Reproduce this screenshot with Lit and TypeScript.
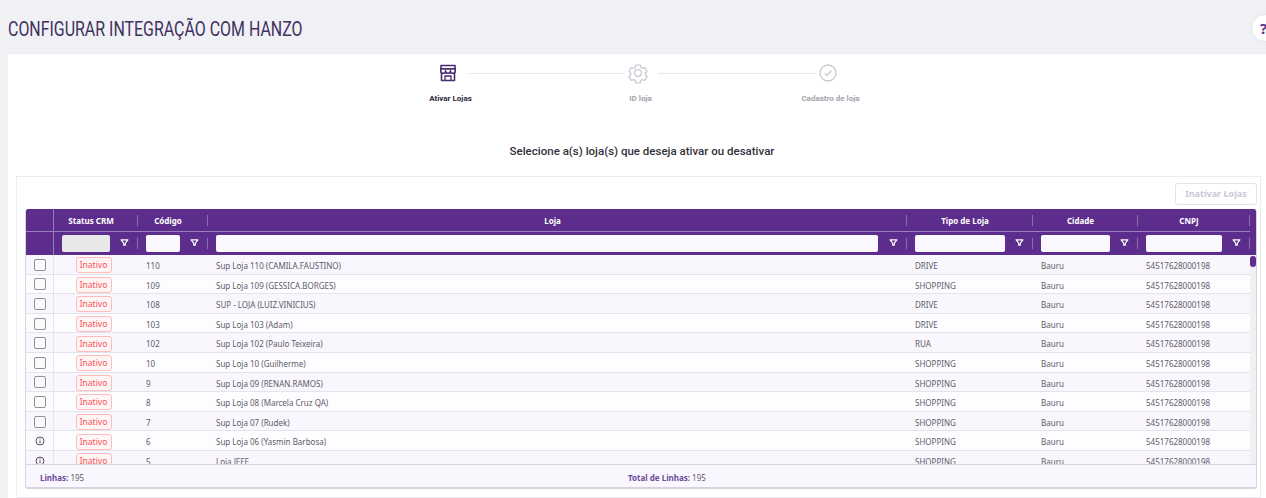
import { LitElement, html, css, svg } from "lit";
import { customElement } from "lit/decorators.js";

const rows: [string, string, string, string][] = [
  ["110", "Sup Loja 110 (CAMILA.FAUSTINO)", "DRIVE", "c"],
  ["109", "Sup Loja 109 (GESSICA.BORGES)", "SHOPPING", "c"],
  ["108", "SUP - LOJA (LUIZ.VINICIUS)", "DRIVE", "c"],
  ["103", "Sup Loja 103 (Adam)", "DRIVE", "c"],
  ["102", "Sup Loja 102 (Paulo Teixeira)", "RUA", "c"],
  ["10", "Sup Loja 10 (Guilherme)", "SHOPPING", "c"],
  ["9", "Sup Loja 09 (RENAN.RAMOS)", "SHOPPING", "c"],
  ["8", "Sup Loja 08 (Marcela Cruz QA)", "SHOPPING", "c"],
  ["7", "Sup Loja 07 (Rudek)", "SHOPPING", "c"],
  ["6", "Sup Loja 06 (Yasmin Barbosa)", "SHOPPING", "i"],
  ["5", "Loja JEFF", "SHOPPING", "i"],
];

const funnel = svg`<svg class="funnel" viewBox="0 0 10 10" width="9" height="9"><path d="M1.2 2h7.6L5.9 5.6V8H4.1V5.6z" fill="none" stroke="#fff" stroke-width="1.3" stroke-linejoin="round"/></svg>`;

const cols = [
  { t: "Status CRM", w: 48, dis: true },
  { t: "Código", w: 34 },
  { t: "Loja", w: 662 },
  { t: "Tipo de Loja", w: 90 },
  { t: "Cidade", w: 69 },
  { t: "CNPJ", w: 76 },
];

@customElement("app-root")
export class AppRoot extends LitElement {
  static styles = css`
    :host {
      display: block;
      position: relative;
      width: 1266px;
      height: 498px;
      overflow: hidden;
      background: #f0f1f5;
      font-family: "Noto Sans", sans-serif;
    }
    .help {
      position: absolute;
      left: 1251px;
      top: 14px;
      width: 28px;
      height: 28px;
      border-radius: 50%;
      background: #fff;
      border: 1px solid #e2e2e8;
      box-sizing: border-box;
      color: #5b2d8c;
      font: 700 15px/26px "Noto Sans", sans-serif;
      padding-left: 8px;
    }
    h1 {
      margin: 0;
      height: 53px;
      box-sizing: border-box;
      padding: 17px 0 0 8px;
      font: 400 20px/25px "Roboto", sans-serif;
      color: #41305f;
      white-space: nowrap;
      transform: scaleX(0.797);
      transform-origin: 8px 0;
    }
    .card {
      margin-left: 8px;
      width: 1262px;
      height: 445px;
      background: #fff;
      box-sizing: border-box;
      border-top: 1px solid #e9e9ee;
      padding-top: 7px;
    }
    .steps {
      display: flex;
      margin-left: 345px;
      width: 570px;
    }
    .step {
      width: 190px;
      display: flex;
      flex-direction: column;
      align-items: center;
      position: relative;
      font: 700 8px/12px "Roboto", sans-serif;
      color: #a3a3ad;
      gap: 8px;
    }
    .step span {
      padding-left: 5px;
    }
    .step.on {
      color: #2d2a3a;
    }
    .step .ic {
      width: 24px;
      height: 24px;
      display: block;
    }
    .line {
      position: absolute;
      top: 12px;
      left: 115px;
      width: 157px;
      height: 1px;
      background: #e7e7ec;
    }
    h2 {
      margin: 38px 0 0 0;
      padding-left: 6px;
      text-align: center;
      font: 500 11.5px/16px "Roboto", sans-serif;
      color: #33313b;
      height: 24px;
    }
    .inner {
      margin: 9px 0 0 8px;
      width: 1245px;
      height: 322px;
      box-sizing: border-box;
      border: 1px solid #ececf0;
      padding: 6px 3px 0 8px;
      display: flex;
      flex-direction: column;
      align-items: flex-end;
    }
    .btn {
      width: 82px;
      height: 22px;
      box-sizing: border-box;
      border: 1px solid #e2e2e8;
      border-radius: 3px;
      background: #fff;
      color: #c9c9d6;
      font: 700 9px/20px "Noto Sans", sans-serif;
      text-align: center;
      flex: none;
    }
    .table {
      margin-top: 4px;
      width: 1232px;
      height: 280px;
      box-sizing: border-box;
      flex: none;
      border: 1px solid #d5d5dd;
      border-top: none;
      border-bottom-width: 2px;
      border-radius: 3px;
      overflow: hidden;
      display: flex;
      flex-direction: column;
      background: #fff;
    }
    .grid {
      display: grid;
      grid-template-columns: 29px 84px 70px 699px 126px 105px 112px;
      margin-left: -1px;
    }
    .head {
      background: #5c2d8c;
      color: #fff;
      height: 46px;
      flex: none;
      width: 1232px;
      grid-template-rows: 23px 23px;
    }
    .hc {
      font: 700 8px/23px "Noto Sans", sans-serif;
      text-align: center;
      position: relative;
      border-bottom: 1px solid #9a7fba;
      box-sizing: border-box;
      padding-right: 10px;
    }
    .hc::after,
    .fc::after {
      content: "";
      position: absolute;
      right: 0;
      top: 6px;
      height: 11px;
      width: 1px;
      background: #8d6fb0;
    }
    .first {
      border-right: 1px solid #9a7fba;
    }
    .first::after {
      display: none;
    }
    .fc {
      position: relative;
      display: flex;
      align-items: center;
      padding: 0 0 0 8px;
      box-sizing: border-box;
    }
    .fc input {
      height: 17px;
      box-sizing: border-box;
      border: 0;
      border-radius: 2px;
      background: #faf8fe;
      padding: 0;
      display: block;
    }
    .fc input:disabled {
      background: #e8e8e8;
    }
    .funnel {
      position: absolute;
      right: 9px;
      top: 6px;
    }
    .body {
      flex: 1;
      min-height: 0;
      overflow: hidden;
      position: relative;
    }
    .row {
      height: 19.6px;
      box-sizing: border-box;
      border-bottom: 1px solid #e4e4ec;
      background: #fdfcff;
      font: 400 8px/21px "Noto Sans", sans-serif;
      color: #5d5d68;
      width: 1226px;
    }
    .row.alt {
      background: #f9f6fd;
    }
    .row > div {
      padding-left: 8px;
      white-space: nowrap;
      overflow: hidden;
      height: 18.6px;
    }
    .row > .chk {
      padding: 1px 0 0 1px;
      border-right: 1px solid #e4e4ec;
      display: flex;
      align-items: center;
      justify-content: center;
      box-sizing: border-box;
    }
    .box {
      width: 12px;
      height: 12px;
      border: 1px solid #8f8f96;
      border-radius: 2px;
      background: #fbfbfc;
      box-sizing: border-box;
    }
    .row > .st {
      padding: 1px 5px 0 0;
      display: flex;
      justify-content: center;
      align-items: center;
    }
    .badge {
      width: 36px;
      height: 16px;
      box-sizing: border-box;
      border: 1px solid #ffbcbc;
      border-radius: 3px;
      background: #fff5f5;
      color: #f4525a;
      font: 400 8.5px/14px "Noto Sans", sans-serif;
      text-align: center;
    }
    .sb {
      position: absolute;
      right: 0;
      top: 0;
      bottom: 0;
      width: 6px;
      background: #f1f1f3;
    }
    .sb i {
      display: block;
      height: 11px;
      margin-top: 1px;
      border-radius: 3px;
      background: #5c2d8c;
    }
    .foot {
      height: 23px;
      flex: none;
      background: #f9f6fd;
      border-top: 1px solid #d5d5dd;
      box-sizing: border-box;
      display: flex;
      font: 400 8px/26px "Noto Sans", sans-serif;
      color: #5d5d68;
    }
    .foot b {
      color: #6a4a9a;
      font-weight: 700;
    }
    .foot .a {
      width: 602px;
      padding-left: 14px;
      box-sizing: border-box;
    }
  `;

  render() {
    return html`
      <h1>CONFIGURAR INTEGRAÇÃO COM HANZO</h1>
      <div class="help">?</div>
      <div class="card">
        <div class="steps">
          <div class="step on">
            <svg class="ic" viewBox="0 0 24 24" fill="none" stroke="#4b2a78" stroke-width="1.6" stroke-linejoin="round">
              <path d="M5 4.5h14v3.2H5z" />
              <path d="M4.8 7.7h14.4v2.2a2.4 2.4 0 0 1-4.8 0 2.4 2.4 0 0 1-4.8 0 2.4 2.4 0 0 1-4.8 0z" />
              <path d="M5.5 12v7.5h13V12" />
              <path d="M9 19.5v-4.5h6v4.5" stroke-width="1.3" />
            </svg>
            <span>Ativar Lojas</span>
            <div class="line"></div>
          </div>
          <div class="step">
            <svg class="ic" viewBox="0 0 24 24" fill="none" stroke="#c6c6d2" stroke-width="1.2" stroke-linejoin="round">
              <path d="M9.8 4h4.4l.6 2.4 1.7 1 2.4-.7 2.2 3.8-1.8 1.7v1.6l1.8 1.7-2.2 3.8-2.4-.7-1.7 1-.6 2.4H9.8l-.6-2.4-1.7-1-2.4.7-2.2-3.8 1.8-1.7v-1.6L2.9 10.5l2.2-3.8 2.4.7 1.7-1z" />
              <circle cx="12" cy="12" r="3.4" />
            </svg>
            <span>ID loja</span>
            <div class="line"></div>
          </div>
          <div class="step">
            <svg class="ic" viewBox="0 0 24 24" fill="none" stroke="#c6c6d2" stroke-width="1.3">
              <circle cx="12" cy="12" r="8" />
              <path d="M8.8 12.2l2.2 2.2 4.2-4.6" />
            </svg>
            <span>Cadastro de loja</span>
          </div>
        </div>
        <h2>Selecione a(s) loja(s) que deseja ativar ou desativar</h2>
        <div class="inner">
          <div class="btn">Inativar Lojas</div>
          <div class="table">
            <div class="grid head">
              <div class="hc first"></div>
              ${cols.map((c) => html`<div class="hc">${c.t}</div>`)}
              <div class="first"></div>
              ${cols.map(
                (c) => html`<div class="fc">
                  <input style="width:${c.w}px" ?disabled=${!!c.dis} />${funnel}
                </div>`
              )}
            </div>
            <div class="body">
              ${rows.map(
                (r, i) => html`<div class="grid row ${i % 2 ? "" : "alt"}">
                  <div class="chk">
                    ${r[3] === "c"
                      ? html`<div class="box"></div>`
                      : html`<svg width="10" height="10" viewBox="0 0 10 10" fill="none" stroke="#5a5068" stroke-width="1">
                          <circle cx="5" cy="5" r="4" />
                          <path d="M5 4.4v3M5 2.5v1" />
                        </svg>`}
                  </div>
                  <div class="st"><div class="badge">Inativo</div></div>
                  <div>${r[0]}</div>
                  <div>${r[1]}</div>
                  <div>${r[2]}</div>
                  <div>Bauru</div>
                  <div>54517628000198</div>
                </div>`
              )}
              <div class="sb"><i></i></div>
            </div>
            <div class="foot">
              <div class="a"><b>Linhas:</b> 195</div>
              <div><b>Total de Linhas:</b> 195</div>
            </div>
          </div>
        </div>
      </div>
    `;
  }
}
